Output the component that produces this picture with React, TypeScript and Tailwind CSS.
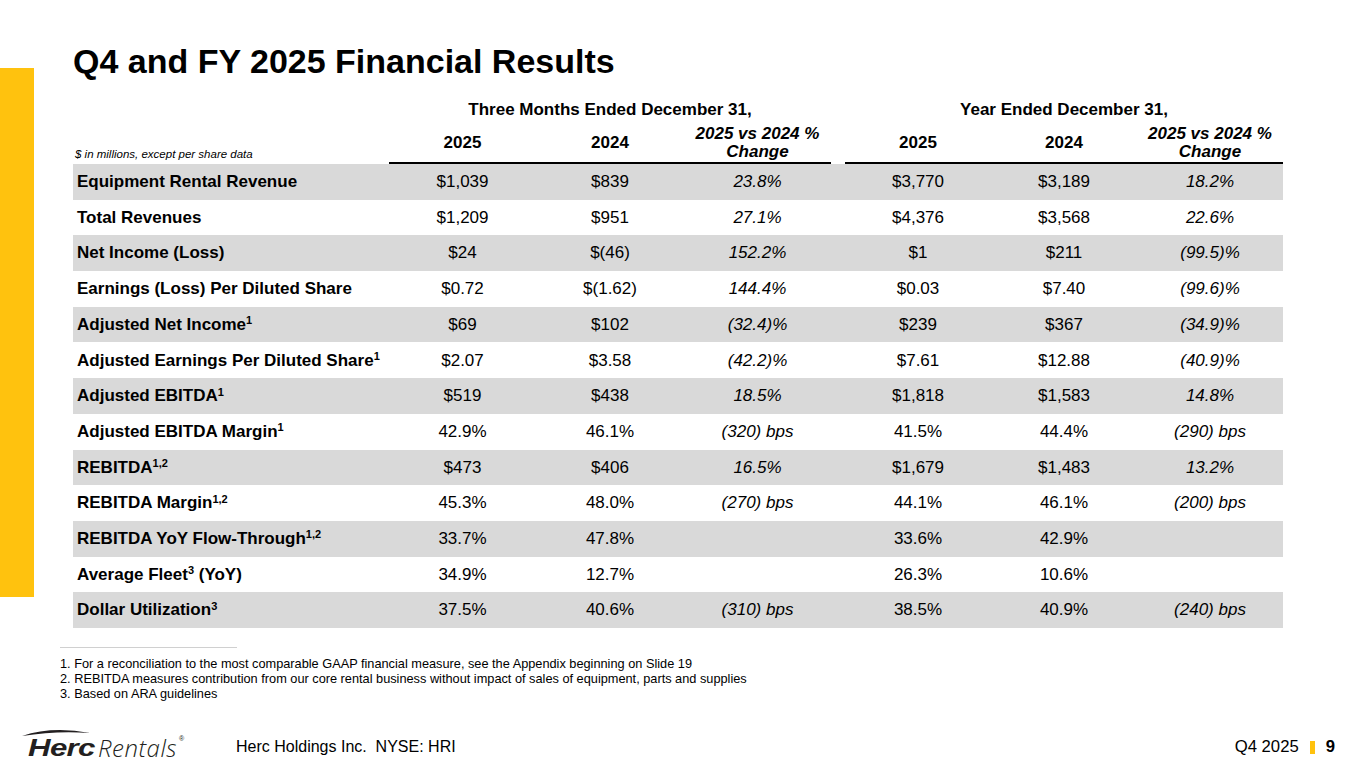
import React from 'react';

type Row = {
  label: React.ReactNode;
  q25: string;
  q24: string;
  qChg: string;
  y25: string;
  y24: string;
  yChg: string;
};

const Sup = ({ children }: { children: React.ReactNode }) => (
  <sup className="text-[11px]">{children}</sup>
);

const rows: Row[] = [
  { label: 'Equipment Rental Revenue', q25: '$1,039', q24: '$839', qChg: '23.8%', y25: '$3,770', y24: '$3,189', yChg: '18.2%' },
  { label: 'Total Revenues', q25: '$1,209', q24: '$951', qChg: '27.1%', y25: '$4,376', y24: '$3,568', yChg: '22.6%' },
  { label: 'Net Income (Loss)', q25: '$24', q24: '$(46)', qChg: '152.2%', y25: '$1', y24: '$211', yChg: '(99.5)%' },
  { label: 'Earnings (Loss) Per Diluted Share', q25: '$0.72', q24: '$(1.62)', qChg: '144.4%', y25: '$0.03', y24: '$7.40', yChg: '(99.6)%' },
  { label: <>Adjusted Net Income<Sup>1</Sup></>, q25: '$69', q24: '$102', qChg: '(32.4)%', y25: '$239', y24: '$367', yChg: '(34.9)%' },
  { label: <>Adjusted Earnings Per Diluted Share<Sup>1</Sup></>, q25: '$2.07', q24: '$3.58', qChg: '(42.2)%', y25: '$7.61', y24: '$12.88', yChg: '(40.9)%' },
  { label: <>Adjusted EBITDA<Sup>1</Sup></>, q25: '$519', q24: '$438', qChg: '18.5%', y25: '$1,818', y24: '$1,583', yChg: '14.8%' },
  { label: <>Adjusted EBITDA Margin<Sup>1</Sup></>, q25: '42.9%', q24: '46.1%', qChg: '(320) bps', y25: '41.5%', y24: '44.4%', yChg: '(290) bps' },
  { label: <>REBITDA<Sup>1,2</Sup></>, q25: '$473', q24: '$406', qChg: '16.5%', y25: '$1,679', y24: '$1,483', yChg: '13.2%' },
  { label: <>REBITDA Margin<Sup>1,2</Sup></>, q25: '45.3%', q24: '48.0%', qChg: '(270) bps', y25: '44.1%', y24: '46.1%', yChg: '(200) bps' },
  { label: <>REBITDA YoY Flow-Through<Sup>1,2</Sup></>, q25: '33.7%', q24: '47.8%', qChg: '', y25: '33.6%', y24: '42.9%', yChg: '' },
  { label: <>Average Fleet<Sup>3</Sup> (YoY)</>, q25: '34.9%', q24: '12.7%', qChg: '', y25: '26.3%', y24: '10.6%', yChg: '' },
  { label: <>Dollar Utilization<Sup>3</Sup></>, q25: '37.5%', q24: '40.6%', qChg: '(310) bps', y25: '38.5%', y24: '40.9%', yChg: '(240) bps' },
];

const GRID = 'grid grid-cols-[316px_147px_148px_147px_14px_146px_146px_146px]';

const HeaderCell = ({ children, italic }: { children: React.ReactNode; italic?: boolean }) => (
  <div
    className={
      'h-[44px] pt-[4px] flex items-center justify-center text-center border-b-2 border-black font-bold leading-[18px] ' +
      (italic ? 'italic' : '')
    }
  >
    {children}
  </div>
);

const Logo = () => (
  <div className="flex flex-col w-[170px]">
    <svg width="68" height="9" viewBox="0 0 68 9" className="ml-[2px]">
      <path d="M0 8 Q30 -2 68 5 Q34 2.5 0 8 Z" fill="#231f20" />
    </svg>
    <div className="flex items-start text-[#231f20] leading-[24px] -mt-[1px]">
      <span className="w-[70px] ml-[8px] shrink-0">
        <span className="inline-block origin-left scale-x-[1.3] text-[24px] font-black italic tracking-[-0.5px] font-['Liberation_Sans',sans-serif]">
          Herc
        </span>
      </span>
      <span className="text-[24px] font-light italic tracking-[0.5px] font-['Open_Sans','Liberation_Sans',sans-serif]">Rentals</span>
      <span className="text-[7px] leading-[7px] ml-[2px] -mt-[1px]">®</span>
    </div>
  </div>
);

export default function App() {
  return (
    <div className="w-[1365px] h-[768px] bg-white flex flex-col overflow-hidden text-black font-['Liberation_Sans','Arial',sans-serif]">
      <div className="flex h-[715px]">
        {/* yellow accent bar */}
        <div className="w-[34px] shrink-0">
          <div className="mt-[68px] h-[529px] bg-[#ffc20e]" />
        </div>

        <div className="pl-[26px] pt-[44px] flex flex-col">
          <h1 className="ml-[13px] text-[34px] leading-[34px] font-bold">Q4 and FY 2025 Financial Results</h1>

          {/* Table */}
          <div className="ml-[13px] mt-[22px] w-[1210px] text-[17px]">
            <div className={GRID + ' h-[20px] leading-[20px] font-bold'}>
              <div />
              <div className="col-span-3 text-center">Three Months Ended December 31,</div>
              <div />
              <div className="col-span-3 text-center">Year Ended December 31,</div>
            </div>
            <div className={GRID}>
              <div className="h-[44px] flex items-end pl-[2px] pb-[3px] text-[11.5px] leading-[13px] italic">
                $ in millions, except per share data
              </div>
              <HeaderCell>2025</HeaderCell>
              <HeaderCell>2024</HeaderCell>
              <HeaderCell italic>
                2025 vs 2024 %<br />Change
              </HeaderCell>
              <div />
              <HeaderCell>2025</HeaderCell>
              <HeaderCell>2024</HeaderCell>
              <HeaderCell italic>
                2025 vs 2024 %<br />Change
              </HeaderCell>
            </div>

            {rows.map((r, i) => (
              <div
                key={i}
                className={GRID + ' h-[35.7px] items-center ' + (i % 2 === 0 ? 'bg-[#d9d9d9]' : 'bg-white')}
              >
                <div className="pl-[4px] font-bold whitespace-nowrap">{r.label}</div>
                <div className="text-center">{r.q25}</div>
                <div className="text-center">{r.q24}</div>
                <div className="text-center italic">{r.qChg}</div>
                <div />
                <div className="text-center">{r.y25}</div>
                <div className="text-center">{r.y24}</div>
                <div className="text-center italic">{r.yChg}</div>
              </div>
            ))}
          </div>

          {/* Footnotes */}
          <div className="mt-[19px] w-[177px] h-px bg-[#d0d0d0]" />
          <div className="mt-[8px] text-[12.75px] leading-[15px]">
            <p>1. For a reconciliation to the most comparable GAAP financial measure, see the Appendix beginning on Slide 19</p>
            <p>2. REBITDA measures contribution from our core rental business without impact of sales of equipment, parts and supplies</p>
            <p>3. Based on ARA guidelines</p>
          </div>
        </div>
      </div>

      {/* Footer */}
      <div className="flex-1 flex items-start pt-[13px] pl-[20px] pr-[30px]">
        <Logo />
        <div className="ml-[46px] mt-[10px] text-[16px] leading-[18px] whitespace-pre">Herc Holdings Inc.  NYSE: HRI</div>
        <div className="ml-auto mt-[10px] flex items-center text-[16.7px] leading-[18px]">
          <span>Q4 2025</span>
          <span className="ml-[11px] w-[5px] h-[13px] bg-[#ffc20e]" />
          <span className="ml-[11px] font-bold">9</span>
        </div>
      </div>
    </div>
  );
}
